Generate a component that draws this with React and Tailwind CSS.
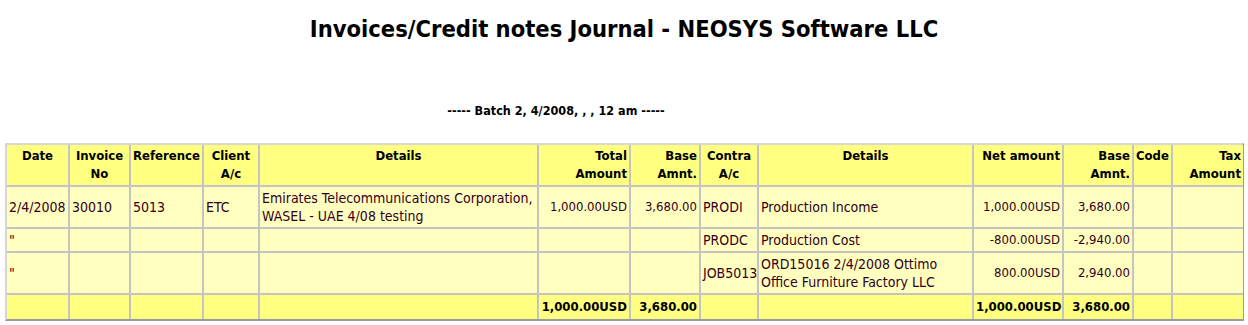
import React from 'react';

const cols = [63, 61, 73, 56, 279, 92, 70, 58, 215, 90, 70, 39, 70];

const heads = [
  { t: ['Date'], a: 'text-center' },
  { t: ['Invoice', 'No'], a: 'text-center' },
  { t: ['Reference'], a: 'text-center' },
  { t: ['Client', 'A/c'], a: 'text-center' },
  { t: ['Details'], a: 'text-center' },
  { t: ['Total', 'Amount'], a: 'text-right' },
  { t: ['Base', 'Amnt.'], a: 'text-right' },
  { t: ['Contra', 'A/c'], a: 'text-center' },
  { t: ['Details'], a: 'text-center' },
  { t: ['Net amount'], a: 'text-right' },
  { t: ['Base', 'Amnt.'], a: 'text-right' },
  { t: ['Code'], a: 'text-left' },
  { t: ['Tax', 'Amount'], a: 'text-right' },
];

// amount columns are right aligned and set a touch smaller
const right = [false, false, false, false, false, true, true, false, false, true, true, false, true];

const rows = [
  ['2/4/2008', '30010', '5013', 'ETC', ['Emirates Telecommunications Corporation,', 'WASEL - UAE 4/08 testing'], '1,000.00USD', '3,680.00', 'PRODI', 'Production Income', '1,000.00USD', '3,680.00', '', ''],
  ['"', '', '', '', '', '', '', 'PRODC', 'Production Cost', '-800.00USD', '-2,940.00', '', ''],
  ['"', '', '', '', '', '', '', 'JOB5013', ['ORD15016 2/4/2008 Ottimo', 'Office Furniture Factory LLC'], '800.00USD', '2,940.00', '', ''],
];

const totals = ['', '', '', '', '', '1,000.00USD', '3,680.00', '', '', '1,000.00USD', '3,680.00', '', ''];

function Cell({ children, last, lastRow, className }) {
  return (
    <td
      className={
        'border-[#c4c4c4] px-[2px] py-[2px] ' +
        (last ? 'border-r-0 ' : 'border-r-2 ') +
        (lastRow ? 'border-b-0 ' : 'border-b-2 ') +
        className
      }
    >
      {children}
    </td>
  );
}

function Lines({ v }) {
  if (Array.isArray(v)) {
    return v.map((l, i) => <div key={i}>{l}</div>);
  }
  return v;
}

export default function App() {
  return (
    <div className="bg-white w-[1248px] h-[325px] overflow-hidden text-black" style={{ fontFamily: '"DejaVu Sans Condensed", "DejaVu Sans", sans-serif' }}>
      <h1 className="text-center text-[23.5px] leading-[28px] font-bold pt-[15px]">
        Invoices/Credit notes Journal - NEOSYS Software LLC
      </h1>
      <div className="text-center text-[12.5px] leading-[18px] font-bold mt-[59px] pr-[136px]">
        ----- Batch 2, 4/2008, , , 12 am -----
      </div>
      <div className="ml-[5px] mt-[23px] w-[1239px] border-2 border-t-[#d8d8d0] border-l-[#d8d8d0] border-r-[#9c9c9c] border-b-[#9c9c9c]">
        <table className="w-full table-fixed border-separate border-spacing-0 text-[13px] leading-[18px]">
          <colgroup>
            {cols.map((w, i) => (
              <col key={i} style={{ width: w }} />
            ))}
          </colgroup>
          <thead>
            <tr className="bg-[#ffff80]">
              {heads.map((h, i) => (
                <Cell key={i} last={i === heads.length - 1} className={'align-top font-bold ' + h.a}>
                  <Lines v={h.t} />
                </Cell>
              ))}
            </tr>
          </thead>
          <tbody className="text-[#33001a]">
            {rows.map((r, ri) => (
              <tr key={ri} className="bg-[#ffffc0]">
                {r.map((v, i) => (
                  <Cell
                    key={i}
                    last={i === r.length - 1}
                    className={'align-middle whitespace-nowrap ' + (right[i] ? 'text-right' : 'text-left text-[14px]')}
                  >
                    <Lines v={v} />
                  </Cell>
                ))}
              </tr>
            ))}
            <tr className="bg-[#ffff80] text-black font-bold">
              {totals.map((v, i) => (
                <Cell
                  key={i}
                  last={i === totals.length - 1}
                  lastRow
                  className={'align-middle whitespace-nowrap h-[24px] ' + (right[i] ? 'text-right' : 'text-left')}
                >
                  {v}
                </Cell>
              ))}
            </tr>
          </tbody>
        </table>
      </div>
    </div>
  );
}
